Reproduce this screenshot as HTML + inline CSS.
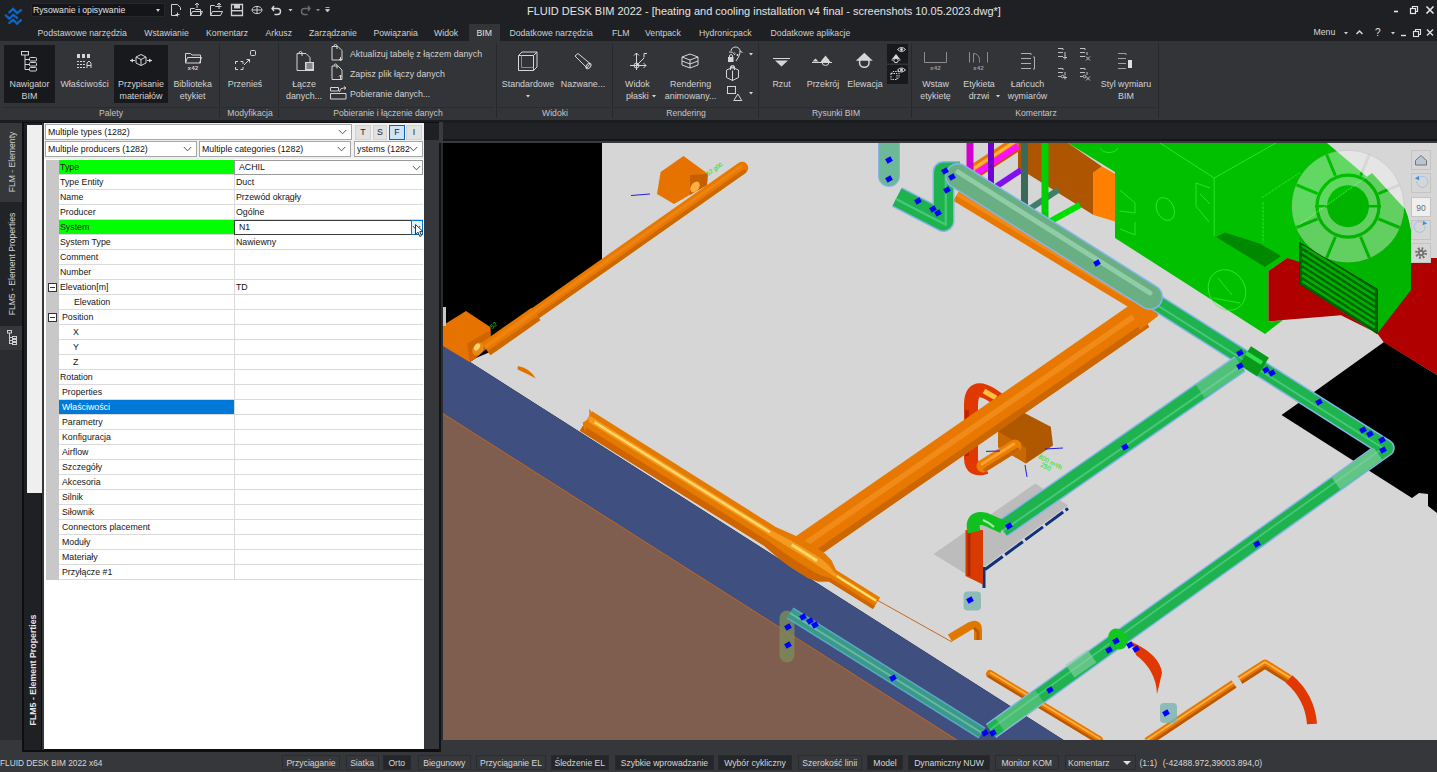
<!DOCTYPE html><html><head><meta charset="utf-8"><style>*{box-sizing:border-box;margin:0;padding:0}
html,body{width:1437px;height:772px;overflow:hidden;background:#36373b;font-family:"Liberation Sans",sans-serif;position:relative}
.a{position:absolute;white-space:nowrap}
.tab{position:absolute;top:28px;font-size:8.7px;color:#d0d0d0;line-height:11px}
.rl{position:absolute;font-size:8.9px;color:#d2d2d2;line-height:12px;white-space:nowrap;transform:translateX(-50%);text-align:center}
.pt{position:absolute;top:107px;font-size:8.6px;color:#c5c5c5;line-height:12px;white-space:nowrap;transform:translateX(-50%)}
.sep{position:absolute;top:43px;width:1px;height:75px;background:#27282b}
.hsep{position:absolute;top:107px;height:1px;background:#2a2b2e}
.act{position:absolute;background:#18191c}
.row{position:absolute;left:0;width:380px;height:15px;font-size:8.8px;color:#141414}
.row .g{position:absolute;left:2px;top:0;width:13px;height:15px;background:#c8c8c8}
.row .k{position:absolute;left:15px;top:0;width:175px;height:15px;line-height:14px;border-bottom:1px solid #dadada}
.row .v{position:absolute;left:190px;top:0;width:189px;height:15px;line-height:14px;border-bottom:1px solid #dadada;border-left:1px solid #dadada;padding-left:1px}
.sb{position:absolute;top:755px;height:15px;font-size:8.6px;color:#d6d6d6;line-height:14px;text-align:center;border:1px solid #2b2c30;background:#36373b;white-space:nowrap}
.sb.d{background:#25262a;border-color:#28292d}
.ic{position:absolute;overflow:visible}
</style></head><body>
<div class="a" style="left:0;top:0;width:1437px;height:41px;background:#1f2024"></div>
<svg class="ic" style="left:0;top:0" width="30" height="30" viewBox="0 0 30 30">
<g fill="none" stroke="#0b66c4" stroke-width="2.3" stroke-linecap="round" stroke-linejoin="miter">
<path d="M9.3 12.4 L13.2 8.9 L17.1 13.2 L21 10.1"/>
<path d="M5.8 15.4 L9.3 18.7 L13.2 14.8 L17.1 17.9"/>
<path d="M9.3 22.9 L13.2 19.8 L17.1 23.7 L21 20.2"/>
</g></svg>
<div class="a" style="left:31px;top:3px;width:134px;height:14px;background:#141518;border:1px solid #26272b"></div>
<div class="a" style="left:33px;top:4px;font-size:8.7px;color:#e2e2e2;line-height:12px">Rysowanie i opisywanie</div>
<div class="a" style="left:156px;top:9px;width:0;height:0;border-left:2.5px solid transparent;border-right:2.5px solid transparent;border-top:3px solid #d0d0d0"></div>
<svg class="ic" style="left:165px;top:0" width="170" height="20" viewBox="165 0 170 20">
<g fill="none" stroke="#cfcfcf" stroke-width="1">
<path d="M171.5 4.5 h6 l3 3 v2.5 M171.5 4.5 v11 h5.5"/><path d="M177.5 12.5 v4 M175.5 14.5 h4"/>
<path d="M190.5 8.5 h4 l1 1 h5 v6 h-10 z M190.5 15.5 l2 -4 h10 l-2 4"/><path d="M197 8 v-5 M195 5 l2 -2 l2 2"/>
<path d="M210.5 5.5 h4 l1 1 h6 M210.5 5.5 v10 h10 l2 -4 h-10 l-2 4"/><path d="M219 9 v-6 M217 5 l2 -2 l2 2"/>
<path d="M231.5 4.5 h11 v11 h-11 z" stroke-width="1.3"/>
</g>
<rect x="234" y="5" width="6" height="3.5" fill="#cfcfcf"/><rect x="232" y="10" width="10" height="1.4" fill="#cfcfcf"/>
<g fill="none" stroke="#cfcfcf" stroke-width="1"><ellipse cx="257" cy="10" rx="5" ry="3.6"/><path d="M252 10 h10 M257 6 v8"/></g>
<path d="M274 6 l-2 2.5 l2 2.5 M272.5 8.5 h5 a3 3 0 0 1 0 6 h-3" fill="none" stroke="#d8d8d8" stroke-width="1.4"/>
<path d="M288.5 9 h4 l-2 2.5 z" fill="#cfcfcf"/>
<path d="M308 6 l2 2.5 l-2 2.5 M309.5 8.5 h-5 a3 3 0 0 0 0 6 h3" fill="none" stroke="#6c6c6e" stroke-width="1.4"/>
<path d="M316 9 h4 l-2 2.5 z" fill="#8a8a8a"/>
<path d="M325.5 7.5 h4 M325.5 9.5 h4 l-2 2.5 z" fill="#cfcfcf" stroke="#cfcfcf" stroke-width="0.8"/>
</svg>
<div class="a" style="left:527px;top:4px;font-size:11px;color:#e4e4e4;line-height:14px">FLUID DESK BIM 2022 - [heating and cooling installation v4 final - screenshots 10.05.2023.dwg*]</div>
<svg class="ic" style="left:1385px;top:0" width="52" height="22" viewBox="1385 0 52 22">
<path d="M1394 11.5 h4" stroke="#e8e8e8" stroke-width="1.6"/>
<g fill="none" stroke="#e8e8e8" stroke-width="1.2"><rect x="1410.5" y="8.5" width="5" height="5"/><path d="M1412.5 8.5 v-2 h5 v5 h-2"/></g>
<path d="M1426.5 6.5 l7 7 M1433.5 6.5 l-7 7" stroke="#e8e8e8" stroke-width="1.6"/>
</svg>
<div class="a" style="left:469px;top:24px;width:31px;height:17px;background:#333438"></div>
<div class="tab" style="left:476.5px;color:#e0e0e0">BIM</div>
<div class="tab" style="left:37.5px">Podstawowe narzędzia</div>
<div class="tab" style="left:144.3px">Wstawianie</div>
<div class="tab" style="left:206px">Komentarz</div>
<div class="tab" style="left:265.5px">Arkusz</div>
<div class="tab" style="left:309px">Zarządzanie</div>
<div class="tab" style="left:373.4px">Powiązania</div>
<div class="tab" style="left:434px">Widok</div>
<div class="tab" style="left:509.4px">Dodatkowe narzędzia</div>
<div class="tab" style="left:612px">FLM</div>
<div class="tab" style="left:645px">Ventpack</div>
<div class="tab" style="left:699px">Hydronicpack</div>
<div class="tab" style="left:770.6px">Dodatkowe aplikacje</div>
<div class="tab" style="left:1313.5px;top:27px;color:#d8d8d8">Menu</div>
<svg class="ic" style="left:1340px;top:22px" width="97" height="20" viewBox="1340 22 97 20">
<path d="M1344 32 h4 l-2 2.5 z" fill="#d0d0d0"/>
<path d="M1356.5 34 l3 -3 l3 3" fill="none" stroke="#d8d8d8" stroke-width="1.5"/>
<path d="M1391 32 h4 l-2 2.5 z" fill="#d0d0d0"/>
<path d="M1401 35.5 h5" stroke="#e0e0e0" stroke-width="1.4"/>
<g fill="none" stroke="#e0e0e0" stroke-width="1.1"><rect x="1413.5" y="31.5" width="5" height="5"/><path d="M1415.5 31.5 v-2 h5 v5 h-2"/></g>
<path d="M1427 29.5 l6 6 M1433 29.5 l-6 6" stroke="#e0e0e0" stroke-width="1.4"/>
</svg>
<div class="a" style="left:1375px;top:27px;font-size:10px;color:#e0e0e0;line-height:12px">?</div>
<div class="a" style="left:0;top:41px;width:1437px;height:79px;background:#333438"></div>
<div class="a" style="left:0;top:120px;width:1437px;height:3px;background:#1b1c1f"></div>
<div class="act" style="left:4px;top:45px;width:51px;height:58px"></div>
<div class="act" style="left:114px;top:45px;width:54px;height:58px"></div>
<div class="sep" style="left:219px"></div>
<div class="sep" style="left:278px"></div>
<div class="sep" style="left:496px"></div>
<div class="sep" style="left:612px"></div>
<div class="sep" style="left:758px"></div>
<div class="sep" style="left:911px"></div>
<div class="sep" style="left:1158px"></div>
<div class="hsep" style="left:3px;width:214px"></div>
<div class="hsep" style="left:221px;width:55px"></div>
<div class="hsep" style="left:280px;width:214px"></div>
<div class="hsep" style="left:498px;width:112px"></div>
<div class="hsep" style="left:614px;width:142px"></div>
<div class="hsep" style="left:760px;width:149px"></div>
<div class="hsep" style="left:913px;width:243px"></div>
<div class="rl" style="left:29.5px;top:78px">Nawigator<br>BIM</div>
<div class="rl" style="left:84.6px;top:78px">Właściwości</div>
<div class="rl" style="left:141px;top:78px">Przypisanie<br>materiałów</div>
<div class="rl" style="left:192.7px;top:78px">Biblioteka<br>etykiet</div>
<div class="rl" style="left:245px;top:78px">Przenieś</div>
<div class="rl" style="left:304px;top:78px">Łącze<br>danych...</div>
<div class="rl" style="left:528px;top:78px">Standardowe</div>
<div class="rl" style="left:583px;top:78px">Nazwane...</div>
<div class="rl" style="left:637.4px;top:78px">Widok<br>płaski</div>
<div class="rl" style="left:690.6px;top:78px">Rendering<br>animowany...</div>
<div class="rl" style="left:781.5px;top:78px">Rzut</div>
<div class="rl" style="left:823px;top:78px">Przekrój</div>
<div class="rl" style="left:865px;top:78px">Elewacja</div>
<div class="rl" style="left:935.5px;top:78px">Wstaw<br>etykietę</div>
<div class="rl" style="left:979px;top:78px">Etykieta<br>drzwi</div>
<div class="rl" style="left:1027.5px;top:78px">Łańcuch<br>wymiarów</div>
<div class="rl" style="left:1126px;top:78px">Styl wymiaru<br>BIM</div>
<div class="pt" style="left:111px">Palety</div>
<div class="pt" style="left:250px">Modyfikacja</div>
<div class="pt" style="left:388px">Pobieranie i łączenie danych</div>
<div class="pt" style="left:555px">Widoki</div>
<div class="pt" style="left:686px">Rendering</div>
<div class="pt" style="left:836px">Rysunki BIM</div>
<div class="pt" style="left:1036px">Komentarz</div>
<div class="a" style="left:350px;top:48px;font-size:8.8px;color:#d2d2d2;line-height:12px">Aktualizuj tabelę z łączem danych</div>
<div class="a" style="left:350px;top:67.5px;font-size:8.8px;color:#d2d2d2;line-height:12px">Zapisz plik łączy danych</div>
<div class="a" style="left:350px;top:87.5px;font-size:8.8px;color:#d2d2d2;line-height:12px">Pobieranie danych...</div>
<svg class="ic" style="left:0;top:41px" width="1170" height="66" viewBox="0 41 1170 66">
<g fill="none" stroke="#d6d6d6" stroke-width="1">
<!-- Nawigator tree -->
<rect x="21.5" y="51.5" width="7" height="3.5"/><path d="M25 55 v14.5 h4 M25 59.5 h4 M25 64.5 h4"/>
<rect x="29.5" y="57.5" width="7" height="3.5" rx="1"/><rect x="29.5" y="62.5" width="7" height="3.5" rx="1"/><rect x="29.5" y="67.5" width="7" height="3.5" rx="1"/>
<!-- Wlasciwosci -->
<path d="M77 61.5 h9 M77 64.5 h9 M77 67.5 h9" stroke-dasharray="2 1"/>
<path d="M87 68 v-5 l2 -2 l2 2 v5 M87 65.5 h4"/>
<!-- Przypisanie cube with arrows -->
<path d="M141 54.5 l5 2.5 v6 l-5 2.5 l-5 -2.5 v-6 z M136 57 l5 2.5 l5 -2.5 M141 59.5 v6"/>
<path d="M130 60.5 h5 M147 60.5 h5"/>
<!-- Biblioteka folder -->
<path d="M185.5 53.5 h5 l1.5 1.5 h8.5 v8 h-15 z M185.5 63 l2 -5.5 h14 l-2 5.5"/>
<!-- Przenies -->
<rect x="250.5" y="50.5" width="5" height="5" rx="1"/>
<path d="M235.5 64 v-2.5 h2.5 M240.5 61.5 h2.5 v2.5 M243 67 v2.5 h-2.5 M238 69.5 h-2.5 v-2.5"/>
<path d="M244 65 l5.5 -5.5 M246.5 59.5 h3 v3"/>
<!-- Lacze -->
<path d="M297 53.5 h9 l4 4 v13 h-13 z"/>
<path d="M299 53 a1.5 1.5 0 0 1 3 0 v3"/>
<!-- small link icons -->
<path d="M332 46.5 h6 l4 4 v9.5 h-10 z M334 46 a1.5 1.5 0 0 1 3 0 v3 M340.5 57 v3.5 M339 59 l1.5 1.5 l1.5 -1.5"/>
<path d="M332 66 h6 l4 4 v9.5 h-10 z M334 65.5 a1.5 1.5 0 0 1 3 0 v3 M340.5 79 v-4 M339 76.5 l1.5 -1.5 l1.5 1.5"/>
<path d="M330.5 87.5 h8 v3.5 h-8 z M330.5 93.5 h15.5 v5.5 h-15.5 z M339.5 92 a4 4 0 0 1 4 -4 h2 M344 86.5 l2 1.5 l-2 1.5"/>
<!-- Standardowe cube -->
<path d="M518.5 55.5 h15 v15 h-15 z M518.5 55.5 l3.5 -3.5 h15 v15 l-3.5 3.5 M533.5 55.5 l3.5 -3.5"/>
<path d="M521.5 55.5 v12 h12" stroke="#8a8a8a"/>
<!-- Nazwane camera -->
<path d="M575 56 l3 -2.5 l12 10 l-3 4.5 z"/><ellipse cx="588.5" cy="66" rx="2" ry="3" transform="rotate(40 588.5 66)"/>
<!-- Widok plaski axes -->
<path d="M636.5 70 v-17 M634 55.5 l2.5 -2.5 l2.5 2.5 M630 65.5 h16 M643.5 63 l2.5 2.5 l-2.5 2.5 M636.5 65.5 l7.5 -7.5"/>
<circle cx="636.5" cy="65.5" r="2.5"/><path d="M644 53.5 h3 M644 53.5 v4"/>
<!-- Rendering cube -->
<path d="M682 57 l8 -3 l8 3 v8 l-8 3 l-8 -3 z M682 57 l8 3 l8 -3 M690 60 v8 M682 61 l8 3 l8 -3"/>
<!-- small rendering icons -->
<path d="M731 51 a4.5 4 0 0 1 7.5 -3 q2 1 1.5 5 q-1 4 -4 8 M729 52 q4 -1 6 3 M740 51 l2.5 1.5"/>
<path d="M734.5 52.5 l1 1 M736.5 55 h2 M737.5 54 v2"/>
<rect x="728.5" y="57.5" width="4.5" height="4" fill="#d6d6d6"/><path d="M729.5 57.5 v-1.5 a1.5 1.5 0 0 1 3 0 v1.5"/>
<path d="M726.5 70 l6 -2.5 l6 2.5 v7.5 l-6 3 l-6 -3 z M732.5 70.5 v10"/>
<path d="M730.5 70 v-3 a2 1.2 0 0 1 4 0 v3"/><ellipse cx="732.5" cy="67" rx="2" ry="1"/>
<rect x="727.5" y="86.5" width="8" height="7"/><path d="M737.8 94 l4 6.5 h-8 z"/>
<!-- Rzut -->
<path d="M773 58.5 h17"/>
<!-- Przekroj -->
<path d="M812 62.5 h20"/><circle cx="825.5" cy="62" r="3.5"/>
<!-- Elewacja -->
<circle cx="864.3" cy="62.5" r="4.8" stroke-width="1.5"/>
<!-- Komentarz icons (dim) -->
<g stroke="#8c8c8c">
<path d="M924.5 52 v10.5 h22 v-10.5"/>
<path d="M969.5 52 v10.5 M987.5 52 v10.5 M973.5 62.5 v-9 a6 6 0 0 1 6 6 v3"/>
</g>
<path d="M1021 53.5 h10 v1.5 M1021 58.5 h10 M1021 63.5 h10 M1021 68.5 h10 M1033 57 h1.5 v12 h-1.5" stroke="#b0b0b0"/>
<path d="M1058 48.5 h5 v1.5 M1058 52.5 h5 M1058 56.5 h5 M1065 52 v4 M1063 57.5 h4 M1065 55.5 v4" stroke="#c0c0c0"/>
<path d="M1080 48.5 h5 v1.5 M1080 52.5 h5 M1080 56.5 h5 M1087 52 v3 M1086 56.5 l4 4 M1090 56.5 l-4 4" stroke="#c0c0c0"/>
<path d="M1058 68.5 h5 v1.5 M1058 72.5 h5 M1058 76.5 h3 M1065 72 v3 M1063 77.5 h4 M1065 75.5 v4" stroke="#c0c0c0"/><circle cx="1062.5" cy="76.5" r="1.3" stroke="#c0c0c0"/>
<path d="M1080 68.5 h5 v1.5 M1080 72.5 h5 M1080 76.5 h3 M1087 72 v3 M1086 76.5 l4 4 M1090 76.5 l-4 4" stroke="#c0c0c0"/><circle cx="1084.5" cy="76.5" r="1.3" stroke="#c0c0c0"/>
<path d="M1118 53.5 h8 v1.5 M1118 58.5 h8 M1118 63.5 h8 M1118 68.5 h8" stroke="#a0a0a0"/>
</g>
<g fill="#d6d6d6">
<rect x="77" y="54" width="3" height="4"/><rect x="82" y="54" width="3" height="4"/><rect x="87" y="54" width="3" height="4"/>
<path d="M130 60.5 l3 -2 v4 z M152 60.5 l-3 -2 v4 z"/>
<text x="193" y="69.5" font-size="6" font-weight="bold" text-anchor="middle" font-family="Liberation Mono" fill="#d0d0d0">x42</text>
<rect x="305" y="62" width="9" height="9"/>
<path d="M775 60.5 h13 l-6.5 6 z"/>
<path d="M812.5 61.5 l3 -3 l3 3 z M820.5 62 l5 -6.5 l5 6.5 z"/>
<path d="M855.8 60.8 l8.5 -8 l8.5 8 z"/>
<rect x="1128" y="60" width="4" height="8" fill="#e0e0e0"/>
<path d="M526 95 h4 l-2 2.5 z M652 95 h4 l-2 2.5 z M749 53 h4 l-2 2.5 z M749 92 h4 l-2 2.5 z M996 95 h4 l-2 2.5 z"/>
</g>
<g fill="#9a9a9a"><text x="935.5" y="69.5" font-size="6" font-weight="bold" text-anchor="middle" font-family="Liberation Mono">x42</text><text x="978.5" y="69.5" font-size="6" font-weight="bold" text-anchor="middle" font-family="Liberation Mono">x42</text></g>
<g fill="#343538" stroke="none"><rect x="306.5" y="63.5" width="6" height="1"/><rect x="306.5" y="65.5" width="6" height="1"/><rect x="306.5" y="67.5" width="6" height="1"/></g>
<!-- dark toggle buttons -->
<rect x="887" y="44" width="21" height="19.5" fill="#18191c"/><rect x="887" y="65" width="21" height="19" fill="#18191c"/>
<g fill="none" stroke="#d8d8d8" stroke-width="1"><path d="M897.5 49.5 q4 -4 8 0 q-4 4 -8 0 z M897.5 70 q4 -4 8 0 q-4 4 -8 0 z"/><circle cx="901.5" cy="49.5" r="1" fill="#d8d8d8"/><circle cx="901.5" cy="70" r="1" fill="#d8d8d8"/>
<path d="M891.5 60 h9 M891 73.5 h6 v6 h-6 z M891 73.5 l2 -2 h6 v6 l-2 2" stroke-dasharray="1.5 1"/></g>
<path d="M892 59 l4 -5 l4 5 z" fill="#d8d8d8"/><circle cx="896" cy="60.5" r="2.2" fill="#18191c" stroke="#d8d8d8"/>
</svg>

<div class="a" style="left:0;top:740px;width:1437px;height:32px;background:#36373b"></div>
<div class="a" style="left:0;top:123px;width:23px;height:617px;background:#2b2c30"></div>
<div class="a" style="left:0;top:123px;width:23px;height:79px;background:#36373b"></div>
<div class="a" style="left:0;top:202px;width:23px;height:124px;background:#222327"></div>
<div class="a" style="left:0;top:326px;width:23px;height:24px;background:#36373b"></div>
<div class="a" style="left:11.5px;top:162px;font-size:8.6px;color:#cfcfcf;line-height:10px;transform:translate(-50%,-50%) rotate(-90deg)">FLM - Elementy</div>
<div class="a" style="left:11.5px;top:264px;font-size:8.6px;color:#d6d6d6;line-height:10px;transform:translate(-50%,-50%) rotate(-90deg)">FLM5 - Element Properties</div>
<svg class="ic" style="left:5px;top:329px" width="14" height="18" viewBox="0 0 14 18"><g fill="none" stroke="#cfcfcf" stroke-width="1"><rect x="2.5" y="1.5" width="4" height="2.5"/><path d="M4.5 4 v11 M4.5 8.5 h3 M4.5 11.5 h3 M4.5 14.5 h3"/><rect x="7.5" y="7.5" width="4" height="2"/><rect x="7.5" y="10.5" width="4" height="2"/><rect x="7.5" y="13.5" width="4" height="2"/></g></svg>
<div class="a" style="left:22px;top:122px;width:418px;height:630px;background:#0e0e10"></div>
<div class="a" style="left:24px;top:123px;width:17px;height:627px;background:#1f2023"></div><div class="a" style="left:42px;top:123px;width:2px;height:627px;background:#36373b"></div>
<div class="a" style="left:27px;top:125px;width:15px;height:368px;background:#efefef"></div>
<div class="a" style="left:32.5px;top:670px;font-size:8.8px;font-weight:bold;color:#e6e6e6;line-height:10px;transform:translate(-50%,-50%) rotate(-90deg)">FLM5 - Element Properties</div>
<div class="a" style="left:424px;top:123px;width:15px;height:17px;background:#1f2023"></div>
<div class="a" style="left:424px;top:140px;width:15px;height:609px;background:#36373b"></div>
<div class="a" style="left:439px;top:122px;width:1.5px;height:630px;background:#111214"></div><div class="a" style="left:440.5px;top:122px;width:2.5px;height:618px;background:#2a2c30"></div>
<div class="a" style="left:439px;top:122px;width:4px;height:21px;background:#3a3b3f"></div>
<div class="a" style="left:44px;top:123px;width:380px;height:626px;background:#fff;overflow:hidden">
<div class="a" style="left:0;top:0;width:380px;height:36px;background:#f0f0f0"></div>
<div class="a" style="left:1px;top:1px;width:307px;height:16px;background:#fff;border:1px solid #a6a6a6;font-size:8.8px;color:#111;line-height:14px;padding-left:2px;overflow:hidden">Multiple types (1282)</div>
<div class="a" style="left:295px;top:2px;width:12px;height:14px;background:#fff"></div>
<svg class="ic" style="left:294px;top:6.0px" width="9" height="6" viewBox="0 0 9 6"><path d="M0.8 1 L4.5 4.8 L8.2 1" fill="none" stroke="#444" stroke-width="0.9"/></svg>
<div class="a" style="left:1px;top:18px;width:152px;height:16px;background:#fff;border:1px solid #a6a6a6;font-size:8.8px;color:#111;line-height:14px;padding-left:2px;overflow:hidden">Multiple producers (1282)</div>
<div class="a" style="left:140px;top:19px;width:12px;height:14px;background:#fff"></div>
<svg class="ic" style="left:139px;top:23.0px" width="9" height="6" viewBox="0 0 9 6"><path d="M0.8 1 L4.5 4.8 L8.2 1" fill="none" stroke="#444" stroke-width="0.9"/></svg>
<div class="a" style="left:155px;top:18px;width:152px;height:16px;background:#fff;border:1px solid #a6a6a6;font-size:8.8px;color:#111;line-height:14px;padding-left:2px;overflow:hidden">Multiple categories (1282)</div>
<div class="a" style="left:294px;top:19px;width:12px;height:14px;background:#fff"></div>
<svg class="ic" style="left:293px;top:23.0px" width="9" height="6" viewBox="0 0 9 6"><path d="M0.8 1 L4.5 4.8 L8.2 1" fill="none" stroke="#444" stroke-width="0.9"/></svg>
<div class="a" style="left:310px;top:18px;width:69px;height:16px;background:#fff;border:1px solid #a6a6a6;font-size:8.8px;color:#111;line-height:14px;padding-left:2px;overflow:hidden">ystems (1282)</div>
<div class="a" style="left:366px;top:19px;width:12px;height:14px;background:#fff"></div>
<svg class="ic" style="left:365px;top:23.0px" width="9" height="6" viewBox="0 0 9 6"><path d="M0.8 1 L4.5 4.8 L8.2 1" fill="none" stroke="#444" stroke-width="0.9"/></svg>
<div class="a" style="left:311px;top:2px;width:16px;height:15px;background:#e1e1e1;border:1px solid #d0d0d0;font-size:8.8px;color:#222;line-height:13px;text-align:center">T</div>
<div class="a" style="left:328.7px;top:2px;width:14.300000000000011px;height:15px;background:#e1e1e1;border:1px solid #d0d0d0;font-size:8.8px;color:#222;line-height:13px;text-align:center">S</div>
<div class="a" style="left:345px;top:2px;width:16px;height:15px;background:#cce4f7;border:1px solid #0a64b4;font-size:8.8px;color:#222;line-height:13px;text-align:center">F</div>
<div class="a" style="left:362px;top:2px;width:16px;height:15px;background:#e1e1e1;border:1px solid #d0d0d0;font-size:8.8px;color:#222;line-height:13px;text-align:center">I</div>
<div class="row" style="top:37px"><div class="g"></div><div class="k" style="background:#00ff00;padding-left:1px">Type</div><div class="v"></div></div>
<div class="row" style="top:52px"><div class="g"></div><div class="k" style="padding-left:1px">Type Entity</div><div class="v">Duct</div></div>
<div class="row" style="top:67px"><div class="g"></div><div class="k" style="padding-left:1px">Name</div><div class="v">Przewód okrągły</div></div>
<div class="row" style="top:82px"><div class="g"></div><div class="k" style="padding-left:1px">Producer</div><div class="v">Ogólne</div></div>
<div class="row" style="top:97px"><div class="g"></div><div class="k" style="background:#00ff00;padding-left:1px">System</div><div class="v"></div></div>
<div class="row" style="top:112px"><div class="g"></div><div class="k" style="padding-left:1px">System Type</div><div class="v">Nawiewny</div></div>
<div class="row" style="top:127px"><div class="g"></div><div class="k" style="padding-left:1px">Comment</div><div class="v"></div></div>
<div class="row" style="top:142px"><div class="g"></div><div class="k" style="padding-left:1px">Number</div><div class="v"></div></div>
<div class="row" style="top:157px"><div class="g"></div><div class="k" style="padding-left:1px">Elevation[m]</div><div class="v">TD</div></div>
<div class="a" style="left:4px;top:160px;width:9px;height:9px;border:1px solid #333;background:#fff"></div><div class="a" style="left:6px;top:164px;width:5px;height:1px;background:#333"></div>
<div class="row" style="top:172px"><div class="g"></div><div class="k" style="padding-left:15px">Elevation</div><div class="v"></div></div>
<div class="row" style="top:187px"><div class="g"></div><div class="k" style="padding-left:3px">Position</div><div class="v"></div></div>
<div class="a" style="left:4px;top:190px;width:9px;height:9px;border:1px solid #333;background:#fff"></div><div class="a" style="left:6px;top:194px;width:5px;height:1px;background:#333"></div>
<div class="row" style="top:202px"><div class="g"></div><div class="k" style="padding-left:14px">X</div><div class="v"></div></div>
<div class="row" style="top:217px"><div class="g"></div><div class="k" style="padding-left:14px">Y</div><div class="v"></div></div>
<div class="row" style="top:232px"><div class="g"></div><div class="k" style="padding-left:14px">Z</div><div class="v"></div></div>
<div class="row" style="top:247px"><div class="g"></div><div class="k" style="padding-left:1px">Rotation</div><div class="v"></div></div>
<div class="row" style="top:262px"><div class="g"></div><div class="k" style="padding-left:3px">Properties</div><div class="v"></div></div>
<div class="row" style="top:277px"><div class="g"></div><div class="k" style="background:#0078d7;color:#fff;padding-left:3px">Właściwości</div><div class="v"></div></div>
<div class="row" style="top:292px"><div class="g"></div><div class="k" style="padding-left:3px">Parametry</div><div class="v"></div></div>
<div class="row" style="top:307px"><div class="g"></div><div class="k" style="padding-left:3px">Konfiguracja</div><div class="v"></div></div>
<div class="row" style="top:322px"><div class="g"></div><div class="k" style="padding-left:3px">Airflow</div><div class="v"></div></div>
<div class="row" style="top:337px"><div class="g"></div><div class="k" style="padding-left:3px">Szczegóły</div><div class="v"></div></div>
<div class="row" style="top:352px"><div class="g"></div><div class="k" style="padding-left:3px">Akcesoria</div><div class="v"></div></div>
<div class="row" style="top:367px"><div class="g"></div><div class="k" style="padding-left:3px">Silnik</div><div class="v"></div></div>
<div class="row" style="top:382px"><div class="g"></div><div class="k" style="padding-left:3px">Siłownik</div><div class="v"></div></div>
<div class="row" style="top:397px"><div class="g"></div><div class="k" style="padding-left:3px">Connectors placement</div><div class="v"></div></div>
<div class="row" style="top:412px"><div class="g"></div><div class="k" style="padding-left:3px">Moduły</div><div class="v"></div></div>
<div class="row" style="top:427px"><div class="g"></div><div class="k" style="padding-left:3px">Materiały</div><div class="v"></div></div>
<div class="row" style="top:442px"><div class="g"></div><div class="k" style="padding-left:3px">Przyłącze #1</div><div class="v"></div></div>
<div class="a" style="left:190px;top:37px;width:189px;height:15px;background:#fff;border:1px solid #9a9a9a;font-size:8.8px;color:#111;line-height:13px;padding-left:4px">ACHIL</div>
<svg class="ic" style="left:368px;top:42px" width="9" height="6" viewBox="0 0 9 6"><path d="M0.8 1 L4.5 4.8 L8.2 1" fill="none" stroke="#444" stroke-width="0.9"/></svg>
<div class="a" style="left:190px;top:97px;width:189px;height:15px;background:#fff;border:1px solid #3c3c3c;font-size:8.8px;color:#111;line-height:13px;padding-left:4px">N1</div>
<div class="a" style="left:367px;top:97px;width:12px;height:15px;background:#e5f1fb;border:1px solid #0078d7"></div>
<svg class="ic" style="left:368px;top:102px" width="9" height="6" viewBox="0 0 9 6"><path d="M0.8 1 L4.5 4.8 L8.2 1" fill="none" stroke="#333" stroke-width="0.9"/></svg>
<svg class="ic" style="left:371px;top:101px" width="10" height="14" viewBox="0 0 10 14"><path d="M0.5 0.5 L0.5 10.5 L3 8.2 L4.8 12.5 L6.5 11.8 L4.8 7.6 L8 7.6 Z" fill="#fff" stroke="#222" stroke-width="0.9"/></svg>
</div>
<div class="a" style="left:443px;top:123px;width:994px;height:16px;background:#212226"></div>
<div class="a" style="left:443px;top:139px;width:994px;height:2px;background:#141517"></div>
<div class="a" style="left:443px;top:141px;width:994px;height:2px;background:#38393d"></div>
<svg class="ic" style="left:443px;top:143px;overflow:hidden" width="994" height="597" viewBox="443 143 994 597">
<rect x="443" y="143" width="994" height="597" fill="#000"/>
<polygon points="602.0,143.0 1437.0,143.0 1437.0,740.0 1063.5,740.0 470.0,362.0 476.0,358.0 490.0,352.0 602.0,272.0" fill="#d6d6d6" />
<polygon points="443.0,345.0 470.0,362.0 1063.5,740.0 957.0,740.0 443.0,413.6" fill="#3f5080" />
<polygon points="443.0,413.6 957.0,740.0 443.0,740.0" fill="#7f5e50" />
<polyline points="443.0,413.6 957.0,740.0" fill="none" stroke="#c86a20" stroke-width="1" stroke-linecap="butt" stroke-linejoin="round" />
<polygon points="1281.5,415.0 1315.5,391.0 1384.0,342.0 1437.0,375.0 1437.0,513.0 1428.0,506.0 1428.0,494.0 1419.0,493.0 1412.0,498.0" fill="#000" />
<polygon points="443.0,325.3 466.0,311.0 490.5,327.3 490.5,345.0 476.0,357.7 469.8,362.3 443.0,346.0" fill="#e67300" />
<polygon points="467.2,343.5 490.5,330.0 490.5,345.0 476.0,357.7 469.8,362.3" fill="#cf6500" />
<polyline points="444.5,307.0 444.5,326.0" fill="none" stroke="#c8c8c8" stroke-width="3" stroke-linecap="butt" stroke-linejoin="round" />
<polyline points="533.0,315.0 742.0,168.0" fill="none" stroke="#e87800" stroke-width="12.5" stroke-linecap="round" stroke-linejoin="round" />
<polyline points="535.4,318.4 744.4,171.4" fill="none" stroke="#cc6800" stroke-width="3.75" stroke-linecap="round" stroke-linejoin="round" />
<polyline points="531.9,313.5 740.9,166.5" fill="none" stroke="#ee8410" stroke-width="3.125" stroke-linecap="round" stroke-linejoin="round" />
<polyline points="486.0,349.0 536.0,314.0" fill="none" stroke="#e87800" stroke-width="15.5" stroke-linecap="butt" stroke-linejoin="round" />
<polyline points="488.9,353.2 538.9,318.2" fill="none" stroke="#cc6800" stroke-width="4.6499999999999995" stroke-linecap="butt" stroke-linejoin="round" />
<polyline points="484.7,347.1 534.7,312.1" fill="none" stroke="#ee8410" stroke-width="3.875" stroke-linecap="butt" stroke-linejoin="round" />
<ellipse cx="478" cy="349" rx="5" ry="7" transform="rotate(35 478 349)" fill="#e98a10"/><ellipse cx="477" cy="347" rx="2.5" ry="4" transform="rotate(35 477 347)" fill="#ffd070"/>
<text x="492" y="329" font-size="6" fill="#00e000" font-family="Liberation Sans" transform="rotate(-35 492 329)">52</text>
<polygon points="660.6,172.0 683.5,156.0 707.8,173.7 707.0,185.0 674.0,204.0 657.0,194.0" fill="#e67300" />
<polygon points="690.0,175.0 707.8,173.7 707.0,185.0 690.0,195.0" fill="#c65f00" />
<ellipse cx="695" cy="187" rx="4" ry="6" transform="rotate(35 695 187)" fill="#ffb040"/>
<text x="708" y="176" font-size="6" fill="#00e000" font-family="Liberation Sans" transform="rotate(-35 708 176)">52 g00</text>
<polyline points="631.0,195.5 650.0,194.0" fill="none" stroke="#2020e0" stroke-width="1" stroke-linecap="butt" stroke-linejoin="round" />
<path d="M517.7 366 q12 2 18 12.4 q-9 -5 -18 -9 z" fill="#e07000"/>
<polygon points="1068.0,143.0 1327.0,143.0 1405.0,209.0 1411.0,230.0 1411.0,290.0 1377.0,334.0 1299.6,284.0 1287.0,258.0 1268.5,271.0 1268.5,322.0 1283.0,320.0 1265.0,334.0 1115.0,238.0 1115.0,172.0" fill="#00c000" />
<path d="M1299 225 L1372 173 L1405 209 Q1411 222 1411 240 L1411 290 Q1405 325 1377 334 L1299 284 Z" fill="#00b400"/>
<polyline points="1299.0,225.0 1372.0,173.0" fill="none" stroke="#55ee55" stroke-width="0.8" stroke-linecap="butt" stroke-linejoin="round" stroke-dasharray="2 1"/>
<polygon points="1216.0,237.0 1225.0,232.5 1259.6,243.4 1281.0,256.0 1265.0,267.0" fill="#008800" />
<polygon points="1268.5,271.0 1287.0,258.0 1299.6,262.0 1299.6,284.0 1377.0,334.0 1411.0,290.0 1411.0,258.0 1437.0,258.0 1437.0,375.0 1384.0,342.4 1377.0,333.3 1341.0,315.2 1283.0,320.0 1268.5,321.6" fill="#b00000" />
<polygon points="1299.6,242.6 1377.4,289.2 1377.4,333.3 1299.6,284.0" fill="#006400" />
<polyline points="1302.0,245.6 1375.0,292.2" fill="none" stroke="#00b000" stroke-width="2.6" stroke-linecap="butt" stroke-linejoin="round" />
<polyline points="1302.0,251.5 1375.0,298.1" fill="none" stroke="#00b000" stroke-width="2.6" stroke-linecap="butt" stroke-linejoin="round" />
<polyline points="1302.0,257.4 1375.0,304.0" fill="none" stroke="#00b000" stroke-width="2.6" stroke-linecap="butt" stroke-linejoin="round" />
<polyline points="1302.0,263.3 1375.0,309.9" fill="none" stroke="#00b000" stroke-width="2.6" stroke-linecap="butt" stroke-linejoin="round" />
<polyline points="1302.0,269.2 1375.0,315.8" fill="none" stroke="#00b000" stroke-width="2.6" stroke-linecap="butt" stroke-linejoin="round" />
<polyline points="1302.0,275.1 1375.0,321.7" fill="none" stroke="#00b000" stroke-width="2.6" stroke-linecap="butt" stroke-linejoin="round" />
<polyline points="1302.0,281.0 1375.0,327.6" fill="none" stroke="#00b000" stroke-width="2.6" stroke-linecap="butt" stroke-linejoin="round" />
<polyline points="1299.6,242.6 1377.4,289.2 1377.4,333.3 1299.6,284.0 1299.6,242.6" fill="none" stroke="#004a00" stroke-width="1" stroke-linecap="butt" stroke-linejoin="round" />
<g fill="none" stroke="#3cf03c" stroke-width="0.7">
<path d="M1214.2 178 V236 M1214.2 178 L1160 143 M1214.2 178 L1276 143"/>
<path d="M1261.4 198 L1300 172.6 M1263 202 V243" stroke-dasharray="3 1"/>
<ellipse cx="1165.3" cy="209" rx="8.5" ry="12" transform="rotate(-25 1165.3 209)"/>
<path d="M1120 190 L1135 203 V213 M1120 211 L1135 213 M1135 222 V235 L1120 229"/>
<path d="M1196 183 L1210 188 M1196 183 V206 L1209 222 M1200 194 L1210 204"/>
<ellipse cx="1227" cy="290" rx="18" ry="21" transform="rotate(-30 1227 290)"/><path d="M1218 278 L1232 295 M1213 298 L1240 303"/>
<path d="M1100 148 a10 8 0 0 0 18 0"/>
</g>
<polygon points="1018.0,143.0 1068.0,143.0 1102.0,166.5 1093.5,172.4 1093.5,215.0 1028.0,174.0 1018.0,168.0" fill="#ad5500" />
<polygon points="1093.5,172.4 1102.0,166.5 1115.0,173.7 1115.0,221.6 1093.5,215.0" fill="#ff7f00" />
<polyline points="975.0,171.0 1018.0,143.0" fill="none" stroke="#e87800" stroke-width="15" stroke-linecap="butt" stroke-linejoin="round" />
<polyline points="977.7,175.1 1020.7,147.1" fill="none" stroke="#b85800" stroke-width="4.5" stroke-linecap="butt" stroke-linejoin="round" />
<polyline points="973.5,168.7 1016.5,140.7" fill="none" stroke="#ffb040" stroke-width="3.3" stroke-linecap="butt" stroke-linejoin="round" />
<polyline points="970.0,143.0 970.0,178.0" fill="none" stroke="#d000d0" stroke-width="7" stroke-linecap="butt" stroke-linejoin="round" />
<polyline points="974.0,175.0 1018.0,146.0" fill="none" stroke="#ff10ff" stroke-width="6" stroke-linecap="butt" stroke-linejoin="round" />
<polyline points="991.0,143.0 991.0,189.0" fill="none" stroke="#7000d0" stroke-width="6" stroke-linecap="butt" stroke-linejoin="round" />
<polyline points="994.0,188.0 1021.0,170.0" fill="none" stroke="#8010f0" stroke-width="6" stroke-linecap="butt" stroke-linejoin="round" />
<polyline points="1024.5,143.0 1024.5,212.0" fill="none" stroke="#3a6a5a" stroke-width="7" stroke-linecap="butt" stroke-linejoin="round" />
<polyline points="1028.0,210.0 1058.0,190.0" fill="none" stroke="#3f7f6a" stroke-width="6" stroke-linecap="butt" stroke-linejoin="round" />
<polyline points="1045.0,143.0 1045.0,224.0" fill="none" stroke="#00d000" stroke-width="7" stroke-linecap="butt" stroke-linejoin="round" />
<polyline points="1049.0,222.0 1080.0,205.0" fill="none" stroke="#00e000" stroke-width="6" stroke-linecap="butt" stroke-linejoin="round" />
<path d="M1002 402 L992 395 Q971 382 971 405 L971 458 Q971 472 986 467" fill="none" stroke="#e03800" stroke-width="14"/>
<path d="M967 410 L967 456" fill="none" stroke="#b82800" stroke-width="4"/>
<path d="M984 391 L996 398" fill="none" stroke="#ffc040" stroke-width="5"/>
<polyline points="790.0,558.0 1141.0,315.0" fill="none" stroke="#e87800" stroke-width="29" stroke-linecap="butt" stroke-linejoin="round" />
<polyline points="796.4,567.3 1147.4,324.3" fill="none" stroke="#cc6600" stroke-width="6.38" stroke-linecap="butt" stroke-linejoin="round" />
<polyline points="788.3,555.6 1139.3,312.6" fill="none" stroke="#f08a18" stroke-width="5.800000000000001" stroke-linecap="butt" stroke-linejoin="round" />
<polyline points="1140.0,299.0 960.0,189.6" fill="none" stroke="#e87800" stroke-width="26" stroke-linecap="butt" stroke-linejoin="round" />
<polyline points="1145.1,290.6 965.1,181.2" fill="none" stroke="#cc6600" stroke-width="6.5" stroke-linecap="butt" stroke-linejoin="round" />
<polyline points="1137.3,303.4 957.3,194.0" fill="none" stroke="#f08a18" stroke-width="3.9" stroke-linecap="butt" stroke-linejoin="round" />
<path d="M1125 300 L1156 302 L1158 316 L1140 330 Z" fill="#e87800"/>
<polygon points="998.0,431.5 1024.4,412.9 1050.8,426.8 1053.0,445.5 1026.0,463.4 998.0,447.0" fill="#b05800" />
<polygon points="998.0,431.5 1026.0,448.0 1026.0,463.4 998.0,447.0" fill="#c86800" />
<polyline points="983.0,466.0 1015.0,446.0" fill="none" stroke="#e88000" stroke-width="13" stroke-linecap="round" stroke-linejoin="round" />
<polyline points="985.3,469.6 1017.3,449.6" fill="none" stroke="#c86400" stroke-width="3.9" stroke-linecap="round" stroke-linejoin="round" />
<polyline points="981.8,464.0 1013.8,444.0" fill="none" stroke="#ffa030" stroke-width="2.86" stroke-linecap="round" stroke-linejoin="round" />
<polyline points="986.0,451.4 1000.0,451.0" fill="none" stroke="#2020e0" stroke-width="1" stroke-linecap="butt" stroke-linejoin="round" />
<polyline points="1045.0,449.0 1063.0,448.0" fill="none" stroke="#2020e0" stroke-width="1" stroke-linecap="butt" stroke-linejoin="round" />
<polyline points="1025.0,465.0 1027.0,477.0" fill="none" stroke="#2020e0" stroke-width="1" stroke-linecap="butt" stroke-linejoin="round" />
<text x="1038" y="458" font-size="6.5" fill="#10e010" font-family="Liberation Sans" transform="rotate(28 1038 458)">800 m³/h</text>
<text x="1040" y="466" font-size="6.5" fill="#10e010" font-family="Liberation Sans" transform="rotate(28 1040 466)">250</text>
<polygon points="592.1,411.3 775.7,527.0 795.0,535.6 807.4,542.2 824.4,552.9 831.5,560.3 836.1,569.9 880.1,597.6 872.9,609.1 828.9,581.4 818.2,581.5 808.4,578.3 791.5,567.7 780.2,559.4 764.0,545.7 579.9,430.7" fill="#e47a00" />
<polygon points="583.2,425.4 767.2,540.5 784.2,552.8 795.9,560.7 812.8,571.3 821.9,575.7 830.9,578.3 874.9,605.9 872.9,609.1 828.9,581.4 818.2,581.5 808.4,578.3 791.5,567.7 780.2,559.4 764.0,545.7 579.9,430.7" fill="#cf6500" />
<polygon points="589.4,415.6 773.0,531.2 791.7,541.0 803.8,548.0 820.8,558.6 828.5,565.1 834.5,572.5 878.5,600.2 876.7,603.0 832.7,575.4 825.2,570.4 816.8,564.9 799.9,554.3 788.0,546.9 770.1,535.9 586.3,420.5" fill="#f59a20" />
<polyline points="594.6,422.3 770.0,532.3" fill="none" stroke="#ffd868" stroke-width="2.5" stroke-linecap="butt" stroke-linejoin="round" />
<polyline points="791.7,544.8 817.1,560.7" fill="none" stroke="#ffd868" stroke-width="3" stroke-linecap="butt" stroke-linejoin="round" />
<polyline points="836.9,576.1 875.9,600.6" fill="none" stroke="#ffe070" stroke-width="2" stroke-linecap="butt" stroke-linejoin="round" />
<polygon points="591.6,412.1 589.0,408.7 589.8,418.7 582.7,422.5 584.7,432.6" fill="#e47a00"/>
<polyline points="877.0,600.0 952.0,642.0" fill="none" stroke="#c86a20" stroke-width="1" stroke-linecap="butt" stroke-linejoin="round" />
<path d="M950 638 L970 626 Q978 622 978 630 L978 640" fill="none" stroke="#e07800" stroke-width="8"/>
<path d="M974 628 L978 632 L978 640" fill="none" stroke="#c05800" stroke-width="3"/>
<polygon points="933.5,554.0 1035.3,483.5 1068.2,505.4 984.0,567.0 984.0,586.0 966.0,574.0" fill="#bcbcbc" />
<polyline points="985.0,569.5 1068.0,508.5" fill="none" stroke="#10307a" stroke-width="3" stroke-linecap="butt" stroke-linejoin="round" stroke-dasharray="22 3"/>
<polyline points="984.0,567.0 984.0,588.0" fill="none" stroke="#10307a" stroke-width="3" stroke-linecap="butt" stroke-linejoin="round" />
<path d="M965.5 530 L983 530 L983 584.5 L965.5 576 Z" fill="#d83a00"/>
<polyline points="969.0,531.0 969.0,576.0" fill="none" stroke="#b02800" stroke-width="3" stroke-linecap="butt" stroke-linejoin="round" />
<polyline points="990.0,674.0 1099.0,740.0" fill="none" stroke="#e87800" stroke-width="8" stroke-linecap="round" stroke-linejoin="round" />
<polyline points="988.6,676.3 1097.6,742.3" fill="none" stroke="#b85800" stroke-width="2.4" stroke-linecap="round" stroke-linejoin="round" />
<polyline points="990.7,672.8 1099.7,738.8" fill="none" stroke="#ffb040" stroke-width="1.76" stroke-linecap="round" stroke-linejoin="round" />
<polyline points="1147.0,742.0 1234.0,684.0" fill="none" stroke="#e87800" stroke-width="9" stroke-linecap="butt" stroke-linejoin="round" />
<polyline points="1148.6,744.5 1235.6,686.5" fill="none" stroke="#b85800" stroke-width="2.6999999999999997" stroke-linecap="butt" stroke-linejoin="round" />
<polyline points="1146.1,740.7 1233.1,682.7" fill="none" stroke="#ffb040" stroke-width="1.98" stroke-linecap="butt" stroke-linejoin="round" />
<polyline points="1240.0,680.0 1265.0,664.0 1289.0,679.0" fill="none" stroke="#e87800" stroke-width="9" stroke-linecap="butt" stroke-linejoin="round" />
<polyline points="1241.6,682.5 1265.0,667.5 1287.4,681.5" fill="none" stroke="#b85800" stroke-width="2.6999999999999997" stroke-linecap="butt" stroke-linejoin="round" />
<polyline points="1239.1,678.6 1265.0,662.1 1289.9,677.6" fill="none" stroke="#ffb040" stroke-width="1.98" stroke-linecap="butt" stroke-linejoin="round" />
<path d="M1289 679 Q1310 697 1312 724" fill="none" stroke="#e03800" stroke-width="10"/>
<path d="M1132 642 Q1160 655 1162 673 L1157 694 Q1156 670 1136 655 Z" fill="#e03800"/>
<polyline points="950.0,172.0 1386.0,448.0 1116.0,641.0 991.0,731.0" fill="none" stroke="#84b6ea" stroke-width="17.5" stroke-linecap="butt" stroke-linejoin="round" />
<polyline points="950.0,172.0 1386.0,448.0 1116.0,641.0 991.0,731.0" fill="none" stroke="#1fb350" stroke-width="14.5" stroke-linecap="butt" stroke-linejoin="round" />
<polyline points="949.1,173.5 1382.9,448.1 1115.0,639.6 990.0,729.6" fill="none" stroke="#48c878" stroke-width="1.74" stroke-linecap="butt" stroke-linejoin="round" />
<polyline points="1002.0,529.0 1240.0,364.0" fill="none" stroke="#84b6ea" stroke-width="19" stroke-linecap="butt" stroke-linejoin="round" />
<polyline points="1002.0,529.0 1240.0,364.0" fill="none" stroke="#1fb350" stroke-width="16" stroke-linecap="butt" stroke-linejoin="round" />
<polyline points="1003.1,530.6 1241.1,365.6" fill="none" stroke="#48c878" stroke-width="1.92" stroke-linecap="butt" stroke-linejoin="round" />
<polyline points="897.0,197.0 943.5,221.0 943.5,172.0 960.0,172.0" fill="none" stroke="#84b6ea" stroke-width="22" stroke-linecap="butt" stroke-linejoin="round" />
<polyline points="897.0,197.0 943.5,221.0 943.5,172.0 960.0,172.0" fill="none" stroke="#1fb350" stroke-width="19" stroke-linecap="butt" stroke-linejoin="round" />
<polyline points="896.0,199.0 945.8,224.7 945.8,174.3 960.0,174.3" fill="none" stroke="#48c878" stroke-width="2.28" stroke-linecap="butt" stroke-linejoin="round" />
<polyline points="889.0,143.0 889.0,176.0" fill="none" stroke="#8ab4e8" stroke-width="22" stroke-linecap="round" stroke-linejoin="round" />
<polyline points="889.0,143.0 889.0,176.0" fill="none" stroke="#6db898" stroke-width="20" stroke-linecap="round" stroke-linejoin="round" />
<polyline points="958.0,176.0 1150.0,297.0" fill="none" stroke="#84b6ea" stroke-width="26" stroke-linecap="round" stroke-linejoin="round" />
<polyline points="958.0,176.0 1150.0,297.0" fill="none" stroke="#6aae84" stroke-width="23" stroke-linecap="round" stroke-linejoin="round" />
<polyline points="958.0,172.0 1150.0,293.0" fill="none" stroke="#9ad4b0" stroke-width="5" stroke-linecap="round" stroke-linejoin="round" opacity="0.8"/>
<polyline points="1378.0,453.7 1336.0,483.5" fill="none" stroke="#8fd0aa" stroke-width="14.5" stroke-linecap="butt" stroke-linejoin="round" opacity="0.6"/>
<polyline points="1092.0,656.0 1070.0,671.0" fill="none" stroke="#8fd0aa" stroke-width="16" stroke-linecap="butt" stroke-linejoin="round" opacity="0.6"/>
<polyline points="1040.0,697.0 1000.0,725.0" fill="none" stroke="#8fd0aa" stroke-width="16" stroke-linecap="butt" stroke-linejoin="round" opacity="0.4"/>
<polyline points="1240.0,364.0 1200.0,391.0" fill="none" stroke="#8fd0aa" stroke-width="16" stroke-linecap="butt" stroke-linejoin="round" opacity="0.45"/>
<ellipse cx="1118" cy="639" rx="9" ry="11" transform="rotate(-35 1118 639)" fill="#10c820"/>
<polyline points="1245.0,355.5 1263.0,367.0" fill="none" stroke="#0a9a1a" stroke-width="22" stroke-linecap="butt" stroke-linejoin="round" />
<polyline points="1246.0,353.0 1262.0,363.0" fill="none" stroke="#30e050" stroke-width="4" stroke-linecap="butt" stroke-linejoin="round" />
<path d="M974 532 Q970 516 985 519 Q992 522 1003 527" fill="none" stroke="#10c020" stroke-width="13" stroke-linecap="butt"/>
<path d="M983 520 Q990 523 994 527" fill="none" stroke="#a0f0a0" stroke-width="2"/>
<polyline points="787.0,618.0 787.0,655.0" fill="none" stroke="#7d8a5a" stroke-width="15" stroke-linecap="round" stroke-linejoin="round" opacity="0.8"/>
<polyline points="790.0,613.0 982.0,733.0" fill="none" stroke="#5aa8c8" stroke-width="13" stroke-linecap="butt" stroke-linejoin="round" />
<polyline points="790.0,613.0 982.0,733.0" fill="none" stroke="#3a9a88" stroke-width="10" stroke-linecap="butt" stroke-linejoin="round" />
<polyline points="790.0,613.0 982.0,733.0" fill="none" stroke="#6ab8a8" stroke-width="2" stroke-linecap="butt" stroke-linejoin="round" />
<rect x="963.6" y="591.4" width="17.4" height="19.2" rx="4" fill="#7cb4b0" opacity="0.8"/>
<rect x="1160" y="703" width="17" height="20" rx="4" fill="#7cb4b0" opacity="0.8"/>
<rect x="886" y="157.5" width="6" height="5" fill="#0000ff" transform="rotate(-30 889 160)"/>
<rect x="886" y="176.5" width="6" height="5" fill="#0000ff" transform="rotate(-30 889 179)"/>
<rect x="915" y="198.5" width="6" height="5" fill="#0000ff" transform="rotate(-30 918 201)"/>
<rect x="930" y="206.5" width="6" height="5" fill="#0000ff" transform="rotate(-30 933 209)"/>
<rect x="935" y="210.5" width="6" height="5" fill="#0000ff" transform="rotate(-30 938 213)"/>
<rect x="944" y="187.5" width="6" height="5" fill="#0000ff" transform="rotate(-30 947 190)"/>
<rect x="942" y="168.5" width="6" height="5" fill="#0000ff" transform="rotate(-30 945 171)"/>
<rect x="949" y="174.5" width="6" height="5" fill="#0000ff" transform="rotate(-30 952 177)"/>
<rect x="1094" y="260.5" width="6" height="5" fill="#0000ff" transform="rotate(-30 1097 263)"/>
<rect x="1237" y="350.5" width="6" height="5" fill="#0000ff" transform="rotate(-30 1240 353)"/>
<rect x="1237" y="363.5" width="6" height="5" fill="#0000ff" transform="rotate(-30 1240 366)"/>
<rect x="1263" y="367.5" width="6" height="5" fill="#0000ff" transform="rotate(-30 1266 370)"/>
<rect x="1269" y="370.5" width="6" height="5" fill="#0000ff" transform="rotate(-30 1272 373)"/>
<rect x="1316" y="399.5" width="6" height="5" fill="#0000ff" transform="rotate(-30 1319 402)"/>
<rect x="1360" y="427.5" width="6" height="5" fill="#0000ff" transform="rotate(-30 1363 430)"/>
<rect x="1367" y="431.5" width="6" height="5" fill="#0000ff" transform="rotate(-30 1370 434)"/>
<rect x="1379" y="437.5" width="6" height="5" fill="#0000ff" transform="rotate(-30 1382 440)"/>
<rect x="1380" y="447.5" width="6" height="5" fill="#0000ff" transform="rotate(-30 1383 450)"/>
<rect x="1122" y="444.5" width="6" height="5" fill="#0000ff" transform="rotate(-30 1125 447)"/>
<rect x="1006" y="523.5" width="6" height="5" fill="#0000ff" transform="rotate(-30 1009 526)"/>
<rect x="1254" y="541.5" width="6" height="5" fill="#0000ff" transform="rotate(-30 1257 544)"/>
<rect x="1113" y="638.5" width="6" height="5" fill="#0000ff" transform="rotate(-30 1116 641)"/>
<rect x="1106" y="647.5" width="6" height="5" fill="#0000ff" transform="rotate(-30 1109 650)"/>
<rect x="1127" y="642.5" width="6" height="5" fill="#0000ff" transform="rotate(-30 1130 645)"/>
<rect x="1133" y="646.5" width="6" height="5" fill="#0000ff" transform="rotate(-30 1136 649)"/>
<rect x="1047" y="687.5" width="6" height="5" fill="#0000ff" transform="rotate(-30 1050 690)"/>
<rect x="982" y="730.5" width="6" height="5" fill="#0000ff" transform="rotate(-30 985 733)"/>
<rect x="990" y="730.5" width="6" height="5" fill="#0000ff" transform="rotate(-30 993 733)"/>
<rect x="785" y="624.5" width="6" height="5" fill="#0000ff" transform="rotate(-30 788 627)"/>
<rect x="785" y="642.5" width="6" height="5" fill="#0000ff" transform="rotate(-30 788 645)"/>
<rect x="800" y="614.5" width="6" height="5" fill="#0000ff" transform="rotate(-30 803 617)"/>
<rect x="807" y="618.5" width="6" height="5" fill="#0000ff" transform="rotate(-30 810 621)"/>
<rect x="812" y="622.5" width="6" height="5" fill="#0000ff" transform="rotate(-30 815 625)"/>
<rect x="890" y="675.5" width="6" height="5" fill="#0000ff" transform="rotate(-30 893 678)"/>
<rect x="967" y="597.5" width="6" height="5" fill="#0000ff" transform="rotate(-30 970 600)"/>
<rect x="1163" y="710.5" width="6" height="5" fill="#0000ff" transform="rotate(-30 1166 713)"/>
<defs><mask id="wm"><circle cx="1348" cy="206.2" r="56" fill="#fff"/><circle cx="1348" cy="206.2" r="21" fill="#000"/><circle cx="1348" cy="206.2" r="31" fill="none" stroke="#000" stroke-width="3.2"/>
<line x1="1378.5" y1="218.8" x2="1400.7" y2="228.0" stroke="#000" stroke-width="3"/>
<line x1="1360.6" y1="236.7" x2="1369.8" y2="258.9" stroke="#000" stroke-width="3"/>
<line x1="1335.4" y1="236.7" x2="1326.2" y2="258.9" stroke="#000" stroke-width="3"/>
<line x1="1317.5" y1="218.8" x2="1295.3" y2="228.0" stroke="#000" stroke-width="3"/>
<line x1="1317.5" y1="193.6" x2="1295.3" y2="184.4" stroke="#000" stroke-width="3"/>
<line x1="1335.4" y1="175.7" x2="1326.2" y2="153.5" stroke="#000" stroke-width="3"/>
<line x1="1360.6" y1="175.7" x2="1369.8" y2="153.5" stroke="#000" stroke-width="3"/>
<line x1="1378.5" y1="193.6" x2="1400.7" y2="184.4" stroke="#000" stroke-width="3"/>
<line x1="1368.0" y1="206.2" x2="1381.0" y2="206.2" stroke="#000" stroke-width="2.5"/>
<line x1="1328.0" y1="206.2" x2="1315.0" y2="206.2" stroke="#000" stroke-width="2.5"/>
</mask></defs>
<rect x="1290" y="148" width="118" height="118" fill="#ffffff" opacity="0.38" mask="url(#wm)"/>
<circle cx="1348" cy="206.2" r="56" fill="none" stroke="#a8a8a8" stroke-width="0.6" opacity="0.5"/>
<rect x="1411.5" y="150.5" width="19" height="19" fill="#d6d6d6" stroke="#c4c4c4" stroke-width="1"/>
<rect x="1411.5" y="173.5" width="19" height="19" fill="#d6d6d6" stroke="#c4c4c4" stroke-width="1"/>
<rect x="1411.5" y="197.5" width="19" height="19" fill="#efefef" stroke="#c4c4c4" stroke-width="1"/>
<rect x="1411.5" y="220.5" width="19" height="19" fill="#d6d6d6" stroke="#c4c4c4" stroke-width="1"/>
<rect x="1411.5" y="243.5" width="19" height="19" fill="#d6d6d6" stroke="#c4c4c4" stroke-width="1"/>
<path d="M1415.5 160.5 l5.5 -5 l5.5 5 v4.5 h-11 z" fill="#b8c6d4" stroke="#6a6a6a" stroke-width="0.9"/>
<path d="M1417 181 a5.5 5.5 0 1 0 3 -4" fill="none" stroke="#9cc4ec" stroke-width="1"/><path d="M1414.8 178.5 l4.2 -2.8 l0.3 4.5 z" fill="#3d8fe0"/>
<text x="1421" y="210.5" font-size="8.5" fill="#6e6e6e" text-anchor="middle" font-family="Liberation Sans">90</text>
<path d="M1425 226 a5.5 5.5 0 1 1 -3 -4" fill="none" stroke="#9cc4ec" stroke-width="1"/><path d="M1427.2 223.5 l-4.2 -2.8 l-0.3 4.5 z" fill="#3d8fe0"/>
<circle cx="1421" cy="253" r="4.6" fill="none" stroke="#707070" stroke-width="2.6" stroke-dasharray="1.8 1.8"/><circle cx="1421" cy="253" r="3.2" fill="#707070"/><circle cx="1421" cy="253" r="1.3" fill="#d6d6d6"/>
</svg>
<div class="a" style="left:0;top:757px;font-size:8.3px;color:#d8d8d8;line-height:12px">FLUID DESK BIM 2022 x64</div>
<div class="sb" style="left:282.0px;width:58.0px">Przyciąganie</div>
<div class="sb" style="left:345.5px;width:33.2px">Siatka</div>
<div class="sb d" style="left:382.5px;width:28.5px">Orto</div>
<div class="sb" style="left:417.5px;width:53.5px">Biegunowy</div>
<div class="sb" style="left:476.0px;width:70.0px">Przyciąganie EL</div>
<div class="sb d" style="left:550.5px;width:58.5px">Śledzenie EL</div>
<div class="sb d" style="left:615.0px;width:98.8px">Szybkie wprowadzanie</div>
<div class="sb d" style="left:718.0px;width:74.0px">Wybór cykliczny</div>
<div class="sb" style="left:797.5px;width:64.5px">Szerokość linii</div>
<div class="sb d" style="left:867.0px;width:36.0px">Model</div>
<div class="sb d" style="left:908.0px;width:82.0px">Dynamiczny NUW</div>
<div class="sb" style="left:994.7px;width:64.0px">Monitor KOM</div>
<div class="sb" style="left:1065px;width:70.5px;text-align:left;padding-left:2px">Komentarz</div>
<div class="a" style="left:1123px;top:761px;width:0;height:0;border-left:4px solid transparent;border-right:4px solid transparent;border-top:4px solid #e0e0e0"></div>
<div class="a" style="left:1139.4px;top:757px;font-size:8.6px;color:#d6d6d6;line-height:12px">(1:1)</div>
<div class="a" style="left:1162.7px;top:757px;font-size:8.6px;color:#d6d6d6;line-height:12px">(-42488.972,39003.894,0)</div>
</body></html>
